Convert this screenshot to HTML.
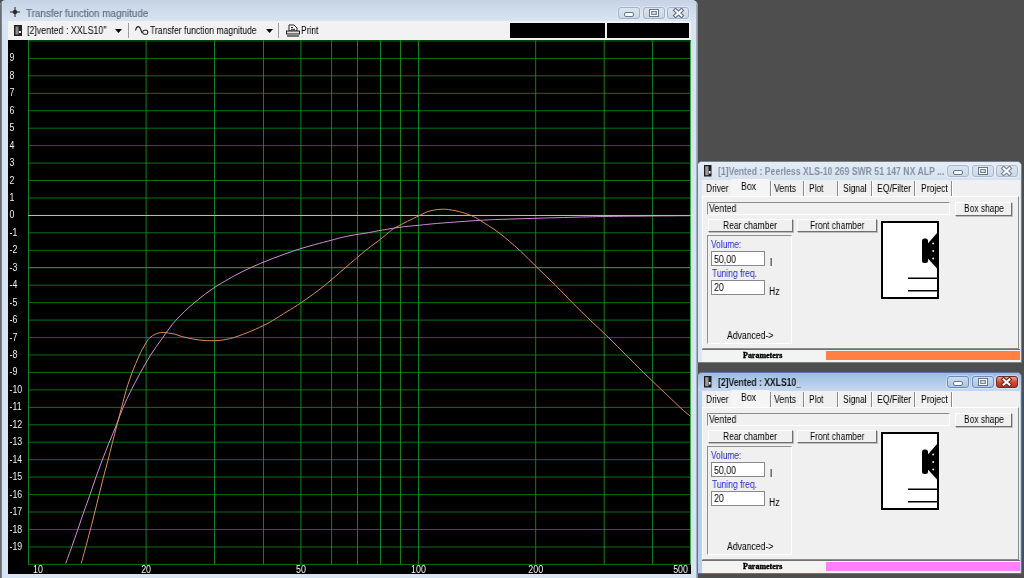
<!DOCTYPE html>
<html><head><meta charset="utf-8"><title>Transfer function magnitude</title>
<style>
html,body{margin:0;padding:0}
body{width:1024px;height:578px;overflow:hidden;background:#4e4e4e;font-family:"Liberation Sans",sans-serif;font-size:10px;color:#000;position:relative}
.abs{position:absolute}
.t{position:absolute;white-space:nowrap;line-height:14px;transform-origin:0 50%;display:block;will-change:transform}
.mw{position:absolute;left:0;top:0;width:698px;height:578px;background:#d9e4f2;overflow:hidden;border-radius:6px 6px 0 0}
.mw .edge{position:absolute;left:0;top:0;width:2px;height:578px;background:linear-gradient(90deg,#5c6066,#8a919a)}
.mw .redge{position:absolute;left:696px;top:0;width:2px;height:578px;background:linear-gradient(90deg,#b4bfcc,#7c848e)}
.mtitle{position:absolute;left:2px;top:0;width:694px;height:21px;background:linear-gradient(#c5d3e4,#d9e4f1)}
.toolbar{position:absolute;left:8px;top:21px;width:683px;height:19px;background:#f2f2f2}
.plot{position:absolute;left:8px;top:40px;will-change:transform}
.tsep{position:absolute;top:23px;width:1px;height:15px;background:#9c9c9c}
.blk{position:absolute;top:23px;height:15px;background:#000}
.wb{position:absolute;top:6.5px;width:22px;height:12px;border:1px solid #a3b2c6;border-radius:3px;background:linear-gradient(#dbe5f1,#cbd8e8);box-sizing:border-box;box-shadow:0 0 0 1px rgba(255,255,255,.35)}
.wb i{position:absolute;display:block;box-sizing:border-box}
.wmin i{left:5px;top:4px;width:10px;height:5px;border:1.5px solid #6a768c;background:#fafbfd;border-radius:2px}
.wmax i{left:5.5px;top:1.3px;width:9.5px;height:8px;border:1.5px solid #6a768c;background:#fafbfd;box-shadow:inset 0 0 0 1.1px #fafbfd, inset 0 0 0 2.3px #7a869a}
.wcls svg{position:absolute;left:3.5px;top:0}
.cw{position:absolute;width:325px;height:202px;background:#dde7f3;border-radius:5px 5px 0 0;box-sizing:border-box;border:1px solid #79818c;overflow:hidden}
.cw.act{background:#b5cfec;border-color:#56779f}
.cw>div{position:absolute;box-sizing:border-box}
.ctitle{left:0;top:0;width:323px;height:18px;background:linear-gradient(#e4ecf6,#d6e1ef)}
.act .ctitle{background:linear-gradient(#9dbce1,#c6d9ef)}
.cw .wb{top:3px;border-color:#aab8cb}
.act .wb{border-color:#6f8db3;background:linear-gradient(#c9dcf1,#a9c5e6)}
.act .wcls{background:linear-gradient(#e9a899,#cf4a32 50%,#b9341c);border-color:#6a2f28}
.cbody{background:#f0f0f0}
.seltab{background:#f5f5f5}
.sep{background:#8c8c8c;box-shadow:1px 0 0 #fff}
.panel{border:1px solid;border-color:#fff #8c8c8c #8c8c8c #fff}
.field{border:1px solid;border-color:#8c8c8c #fff #fff #8c8c8c}
.btn{border:1px solid;border-color:#fff #707070 #707070 #fff;box-shadow:1px 1px 0 #bdbdbd;background:#f0f0f0}
.sub{border:1px solid;border-color:#909090 #fff #fff #909090}
.inp{border:1px solid #8a8a8a;background:#fff}
.status{background:#f3f3f3;border-top:1px solid #707070}
</style></head><body>
<div class="mw">
<div class="mtitle"></div>
<svg class="abs" style="left:10px;top:7px" width="10" height="10" viewBox="0 0 10 10"><circle cx="5" cy="5" r="1.8" fill="#444" stroke="#222" stroke-width="1"/><path d="M5 0V10M0 5H10" stroke="#222" stroke-width="1"/></svg>
<span class="t" style="left:25.50px;top:6.06px;font-size:10.5px;transform:scaleX(0.9383);color:#5f7086;-webkit-text-stroke:.2px #5f7086;">Transfer function magnitude</span>
<span class="wb wmin" style="left:618px"><i></i></span><span class="wb wmax" style="left:642.5px"><i></i></span><span class="wb wcls" style="left:667px"><svg width="13" height="10" viewBox="-1 -0.5 13 10"><path d="M2.6 1.9 L8.4 7.1 M8.4 1.9 L2.6 7.1" stroke="#64708a" stroke-width="4.2" stroke-linecap="square" fill="none"/><path d="M2.6 1.9 L8.4 7.1 M8.4 1.9 L2.6 7.1" stroke="#fafbfd" stroke-width="2" stroke-linecap="square" fill="none"/></svg></span>
<div class="toolbar"></div>
<svg class="abs" style="left:14px;top:25px" width="8" height="11" viewBox="0 0 8 11"><rect width="8" height="11" fill="#222"/><rect x="1.5" y="1.5" width="3" height="8" fill="#8c8c8c"/><rect x="5" y="6" width="2" height="2" fill="#eee"/></svg>
<span class="t" style="left:26.60px;top:24.43px;font-size:10px;transform:scaleX(0.8857);">[2]vented : XXLS10''</span>
<svg class="abs" style="left:115px;top:29px" width="7" height="4" viewBox="0 0 7 4"><path d="M0 0H7L3.5 4Z" fill="#000"/></svg>
<i class="tsep" style="left:128px"></i>
<svg class="abs" style="left:135px;top:25px" width="14" height="11" viewBox="0 0 14 11"><path d="M0.5 5.5 C1.5 0.5 4.5 0.5 5.8 4.5 L7 8" fill="none" stroke="#222" stroke-width="1.1"/><rect x="7.8" y="5.3" width="5" height="4" rx="1.6" fill="none" stroke="#222" stroke-width="1.1"/></svg>
<span class="t" style="left:150.40px;top:24.43px;font-size:10px;transform:scaleX(0.8588);">Transfer function magnitude</span>
<svg class="abs" style="left:266px;top:29px" width="7" height="4" viewBox="0 0 7 4"><path d="M0 0H7L3.5 4Z" fill="#000"/></svg>
<i class="tsep" style="left:278px"></i>
<svg class="abs" style="left:285.5px;top:24px" width="14" height="13" viewBox="0 0 14 13"><path d="M3 7V1H8L11 4V7Z" fill="#fff" stroke="#222" stroke-width="1"/><rect x="0.5" y="7" width="13" height="3" fill="#ddd" stroke="#222" stroke-width="1"/><path d="M1 12H13" stroke="#222" stroke-width="1.2"/><path d="M5 3.5H7M5 5.3H9" stroke="#222" stroke-width="1"/></svg>
<span class="t" style="left:300.50px;top:24.43px;font-size:10px;transform:scaleX(0.8463);">Print</span>
<i class="blk" style="left:510px;width:95px"></i><i class="blk" style="left:607px;width:82px"></i>
<svg class="plot" width="683" height="534" viewBox="8 40 683 534" stroke-width="0.85">
<rect x="8" y="40" width="683" height="534" fill="#000"/>
<line x1="28.0" y1="564.4" x2="690.9" y2="564.4" stroke="#10831a"/>
<line x1="28.0" y1="547.0" x2="690.9" y2="547.0" stroke="#10831a"/>
<line x1="28.0" y1="529.5" x2="690.9" y2="529.5" stroke="#10831a"/>
<line x1="28.0" y1="512.0" x2="690.9" y2="512.0" stroke="#10831a"/>
<line x1="28.0" y1="494.6" x2="690.9" y2="494.6" stroke="#10831a"/>
<line x1="28.0" y1="477.1" x2="690.9" y2="477.1" stroke="#10831a"/>
<line x1="28.0" y1="459.7" x2="690.9" y2="459.7" stroke="#10831a"/>
<line x1="28.0" y1="442.2" x2="690.9" y2="442.2" stroke="#10831a"/>
<line x1="28.0" y1="424.8" x2="690.9" y2="424.8" stroke="#10831a"/>
<line x1="28.0" y1="407.4" x2="690.9" y2="407.4" stroke="#10831a"/>
<line x1="28.0" y1="389.9" x2="690.9" y2="389.9" stroke="#10831a"/>
<line x1="28.0" y1="372.4" x2="690.9" y2="372.4" stroke="#10831a"/>
<line x1="28.0" y1="355.0" x2="690.9" y2="355.0" stroke="#10831a"/>
<line x1="28.0" y1="337.6" x2="690.9" y2="337.6" stroke="#10831a"/>
<line x1="28.0" y1="320.1" x2="690.9" y2="320.1" stroke="#10831a"/>
<line x1="28.0" y1="302.6" x2="690.9" y2="302.6" stroke="#10831a"/>
<line x1="28.0" y1="285.2" x2="690.9" y2="285.2" stroke="#10831a"/>
<line x1="28.0" y1="267.8" x2="690.9" y2="267.8" stroke="#10831a"/>
<line x1="28.0" y1="250.3" x2="690.9" y2="250.3" stroke="#10831a"/>
<line x1="28.0" y1="232.8" x2="690.9" y2="232.8" stroke="#10831a"/>
<line x1="28.0" y1="215.4" x2="690.9" y2="215.4" stroke="#10831a"/>
<line x1="28.0" y1="198.0" x2="690.9" y2="198.0" stroke="#10831a"/>
<line x1="28.0" y1="180.5" x2="690.9" y2="180.5" stroke="#10831a"/>
<line x1="28.0" y1="163.1" x2="690.9" y2="163.1" stroke="#10831a"/>
<line x1="28.0" y1="145.6" x2="690.9" y2="145.6" stroke="#10831a"/>
<line x1="28.0" y1="128.2" x2="690.9" y2="128.2" stroke="#10831a"/>
<line x1="28.0" y1="110.7" x2="690.9" y2="110.7" stroke="#10831a"/>
<line x1="28.0" y1="93.3" x2="690.9" y2="93.3" stroke="#10831a"/>
<line x1="28.0" y1="75.8" x2="690.9" y2="75.8" stroke="#10831a"/>
<line x1="28.0" y1="58.4" x2="690.9" y2="58.4" stroke="#10831a"/>
<line x1="28.0" y1="40.9" x2="690.9" y2="40.9" stroke="#10831a"/>
<line x1="28.5" y1="40.4" x2="28.5" y2="564.3" stroke="#14991a"/>
<line x1="146.1" y1="40.4" x2="146.1" y2="564.3" stroke="#14991a"/>
<line x1="214.5" y1="40.4" x2="214.5" y2="564.3" stroke="#14991a"/>
<line x1="263.5" y1="40.4" x2="263.5" y2="564.3" stroke="#14991a"/>
<line x1="300.9" y1="40.4" x2="300.9" y2="564.3" stroke="#14991a"/>
<line x1="331.6" y1="40.4" x2="331.6" y2="564.3" stroke="#14991a"/>
<line x1="357.5" y1="40.4" x2="357.5" y2="564.3" stroke="#14991a"/>
<line x1="380.5" y1="40.4" x2="380.5" y2="564.3" stroke="#14991a"/>
<line x1="400.5" y1="40.4" x2="400.5" y2="564.3" stroke="#14991a"/>
<line x1="418.5" y1="40.4" x2="418.5" y2="564.3" stroke="#14991a"/>
<line x1="535.7" y1="40.4" x2="535.7" y2="564.3" stroke="#14991a"/>
<line x1="604.2" y1="40.4" x2="604.2" y2="564.3" stroke="#14991a"/>
<line x1="652.6" y1="40.4" x2="652.6" y2="564.3" stroke="#14991a"/>
<line x1="690.6" y1="40.4" x2="690.6" y2="564.3" stroke="#35c447" stroke-width="1"/>
<line x1="28.0" y1="215.5" x2="690.9" y2="215.5" stroke="#c9b988" stroke-width="1"/>
<line x1="28.0" y1="267.5" x2="690.9" y2="267.5" stroke="#2f66cc" stroke-width="1"/>
<path d="M65.7 563.5C66.7 560.7 69.8 552.3 71.8 546.7C73.8 541.1 75.7 535.6 77.7 529.8C79.7 524.0 81.7 517.9 83.8 512.0C85.8 506.1 88.0 500.5 90.0 494.7C92.0 488.9 93.9 483.1 95.9 477.3C97.9 471.6 100.0 466.0 102.2 460.2C104.5 454.4 106.7 448.6 109.1 442.6C111.5 436.7 114.3 430.4 116.6 424.5C118.9 418.6 120.6 413.2 123.1 407.4C125.6 401.6 128.6 395.5 131.5 389.7C134.4 383.9 137.1 378.6 140.3 372.8C143.5 367.0 146.9 360.9 150.6 355.1C154.3 349.3 158.4 343.6 162.6 337.8C166.8 332.0 170.4 326.2 175.8 320.3C181.2 314.4 187.9 308.1 194.9 302.3C201.9 296.5 208.5 291.2 217.8 285.4C227.2 279.6 238.4 273.2 251.2 267.4C264.0 261.6 281.5 255.0 294.9 250.5C308.3 246.0 322.3 242.7 331.5 240.2C340.7 237.7 343.9 236.9 350.0 235.7C356.1 234.4 363.3 233.6 368.4 232.7C373.5 231.8 375.1 231.3 380.4 230.4C385.7 229.5 393.6 228.0 400.0 227.2C406.4 226.3 411.9 226.0 418.6 225.3C425.3 224.6 429.8 224.0 440.0 223.2C450.2 222.4 470.0 220.9 480.0 220.3C490.0 219.7 490.7 219.7 500.0 219.4C509.3 219.1 527.1 218.6 535.9 218.3C544.7 218.0 546.5 218.0 553.0 217.8C559.5 217.6 567.2 217.4 575.0 217.2C582.8 217.0 589.2 216.8 600.0 216.6C610.8 216.4 625.0 216.2 640.0 216.1C655.0 215.9 681.7 215.8 690.0 215.7" fill="none" stroke="#dc90e2" stroke-width="0.95"/>
<path d="M81.2 563.5C82.0 560.7 84.3 552.3 85.8 546.7C87.3 541.1 88.8 535.6 90.3 529.8C91.9 524.0 93.4 517.9 94.8 512.0C96.3 506.1 97.7 500.5 99.1 494.7C100.5 488.9 101.9 483.1 103.4 477.3C104.9 471.6 106.5 466.0 108.0 460.2C109.5 454.4 110.9 448.6 112.4 442.6C113.9 436.7 115.6 430.4 117.1 424.5C118.6 418.6 120.1 413.2 121.6 407.4C123.1 401.6 124.6 395.5 126.3 389.7C128.0 383.9 129.8 378.6 132.0 372.8C134.2 367.0 137.6 359.2 139.4 355.1C141.2 351.0 141.8 350.4 143.0 348.2C144.2 346.0 145.3 343.8 146.5 342.0C147.7 340.2 148.5 338.9 150.0 337.6C151.5 336.3 153.3 335.0 155.5 334.1C157.7 333.2 160.0 332.5 163.1 332.5C166.2 332.5 170.6 333.2 173.8 333.9C177.1 334.6 178.5 335.7 182.6 336.7C186.7 337.7 192.9 339.2 198.2 339.9C203.5 340.6 209.2 340.9 214.4 340.7C219.6 340.5 224.2 340.0 229.6 338.7C235.0 337.4 241.4 335.0 247.0 332.8C252.6 330.6 259.0 327.7 263.3 325.6C267.6 323.6 268.7 322.8 272.6 320.5C276.6 318.2 282.2 314.6 287.0 311.6C291.8 308.6 295.3 306.8 301.6 302.4C307.9 298.1 317.5 291.2 324.8 285.4C332.1 279.5 338.8 273.2 345.7 267.4C352.6 261.5 360.2 254.9 366.0 250.2C371.8 245.5 376.7 242.2 380.4 239.3C384.1 236.4 385.8 234.7 388.4 232.7C391.0 230.7 391.1 229.9 396.2 227.1C401.3 224.3 413.4 218.4 419.0 215.7C424.6 213.0 425.7 212.0 430.0 210.9C434.3 209.8 439.8 209.1 444.7 209.2C449.6 209.4 455.1 210.6 459.5 211.7C463.9 212.8 467.9 214.2 471.3 215.6C474.7 217.0 475.4 217.4 480.0 220.3C484.6 223.2 492.5 227.9 499.1 232.9C505.7 237.9 513.4 244.7 519.7 250.4C526.0 256.1 531.0 261.5 536.9 267.3C542.8 273.1 549.5 279.3 555.4 285.2C561.3 291.1 566.4 296.6 572.2 302.5C578.0 308.4 584.2 314.4 590.3 320.3C596.4 326.2 602.9 332.0 608.8 337.8C614.7 343.6 620.1 349.1 625.9 354.9C631.7 360.7 637.8 366.9 643.8 372.8C649.7 378.6 655.5 383.9 661.5 389.7C667.5 395.5 675.3 402.9 680.0 407.3C684.7 411.7 688.2 414.4 689.8 415.8" fill="none" stroke="#e6925e" stroke-width="0.95"/>
<g font-family="Liberation Sans, sans-serif" font-size="10.2" fill="#f0f0f0" stroke="none">
<text x="9.5" y="550.0" textLength="12.7" lengthAdjust="spacingAndGlyphs">-19</text>
<text x="9.5" y="532.5" textLength="12.7" lengthAdjust="spacingAndGlyphs">-18</text>
<text x="9.5" y="515.0" textLength="12.7" lengthAdjust="spacingAndGlyphs">-17</text>
<text x="9.5" y="497.6" textLength="12.7" lengthAdjust="spacingAndGlyphs">-16</text>
<text x="9.5" y="480.1" textLength="12.7" lengthAdjust="spacingAndGlyphs">-15</text>
<text x="9.5" y="462.7" textLength="12.7" lengthAdjust="spacingAndGlyphs">-14</text>
<text x="9.5" y="445.2" textLength="12.7" lengthAdjust="spacingAndGlyphs">-13</text>
<text x="9.5" y="427.8" textLength="12.7" lengthAdjust="spacingAndGlyphs">-12</text>
<text x="9.5" y="410.4" textLength="12.0" lengthAdjust="spacingAndGlyphs">-11</text>
<text x="9.5" y="392.9" textLength="12.7" lengthAdjust="spacingAndGlyphs">-10</text>
<text x="9.5" y="375.4" textLength="7.8" lengthAdjust="spacingAndGlyphs">-9</text>
<text x="9.5" y="358.0" textLength="7.8" lengthAdjust="spacingAndGlyphs">-8</text>
<text x="9.5" y="340.6" textLength="7.8" lengthAdjust="spacingAndGlyphs">-7</text>
<text x="9.5" y="323.1" textLength="7.8" lengthAdjust="spacingAndGlyphs">-6</text>
<text x="9.5" y="305.6" textLength="7.8" lengthAdjust="spacingAndGlyphs">-5</text>
<text x="9.5" y="288.2" textLength="7.8" lengthAdjust="spacingAndGlyphs">-4</text>
<text x="9.5" y="270.8" textLength="7.8" lengthAdjust="spacingAndGlyphs">-3</text>
<text x="9.5" y="253.3" textLength="7.8" lengthAdjust="spacingAndGlyphs">-2</text>
<text x="9.5" y="235.8" textLength="7.8" lengthAdjust="spacingAndGlyphs">-1</text>
<text x="9.5" y="218.4" textLength="4.9" lengthAdjust="spacingAndGlyphs">0</text>
<text x="9.5" y="201.0" textLength="4.9" lengthAdjust="spacingAndGlyphs">1</text>
<text x="9.5" y="183.5" textLength="4.9" lengthAdjust="spacingAndGlyphs">2</text>
<text x="9.5" y="166.1" textLength="4.9" lengthAdjust="spacingAndGlyphs">3</text>
<text x="9.5" y="148.6" textLength="4.9" lengthAdjust="spacingAndGlyphs">4</text>
<text x="9.5" y="131.2" textLength="4.9" lengthAdjust="spacingAndGlyphs">5</text>
<text x="9.5" y="113.7" textLength="4.9" lengthAdjust="spacingAndGlyphs">6</text>
<text x="9.5" y="96.3" textLength="4.9" lengthAdjust="spacingAndGlyphs">7</text>
<text x="9.5" y="78.8" textLength="4.9" lengthAdjust="spacingAndGlyphs">8</text>
<text x="9.5" y="61.4" textLength="4.9" lengthAdjust="spacingAndGlyphs">9</text>
<text x="33.0" y="573" text-anchor="start" textLength="9.9" lengthAdjust="spacingAndGlyphs">10</text>
<text x="146.1" y="573" text-anchor="middle" textLength="9.9" lengthAdjust="spacingAndGlyphs">20</text>
<text x="300.9" y="573" text-anchor="middle" textLength="9.9" lengthAdjust="spacingAndGlyphs">50</text>
<text x="418.5" y="573" text-anchor="middle" textLength="14.8" lengthAdjust="spacingAndGlyphs">100</text>
<text x="535.7" y="573" text-anchor="middle" textLength="14.8" lengthAdjust="spacingAndGlyphs">200</text>
<text x="688.0" y="573" text-anchor="end" textLength="14.8" lengthAdjust="spacingAndGlyphs">500</text>
</g>
</svg>
<i class="edge"></i><i class="redge"></i>
</div>
<div class="cw" style="left:697px;top:161px">
<div class="ctitle"></div>
<svg class="abs" style="left:6px;top:3px" width="7.5" height="11.5" viewBox="0 0 7.5 11.5"><rect width="7.5" height="11.5" fill="#1c1c1c"/><rect x="1.2" y="1.2" width="3.3" height="9" fill="#9a9a9a"/><rect x="4.8" y="6" width="1.8" height="2.5" fill="#efefef"/></svg>
<span class="t" style="left:19.80px;top:2.16px;font-size:10.5px;transform:scaleX(0.8269);font-weight:bold;color:#8491a5;">[1]Vented : Peerless XLS-10 269 SWR 51 147 NX ALP ...</span>
<span class="wb wmin" style="left:249px"><i></i></span><span class="wb wmax" style="left:273.5px"><i></i></span><span class="wb wcls" style="left:297.5px"><svg width="13" height="10" viewBox="-1 -0.5 13 10"><path d="M2.6 1.9 L8.4 7.1 M8.4 1.9 L2.6 7.1" stroke="#7a869a" stroke-width="4.2" stroke-linecap="square" fill="none"/><path d="M2.6 1.9 L8.4 7.1 M8.4 1.9 L2.6 7.1" stroke="#fafbfd" stroke-width="2" stroke-linecap="square" fill="none"/></svg></span>
<div class="cbody" style="left:4px;top:17.5px;width:318px;height:170px;"></div>
<div class="seltab" style="left:33px;top:17px;width:38px;height:17px;"></div>
<div class="sep" style="left:72px;top:19px;width:1px;height:15px;"></div>
<div class="sep" style="left:104.5px;top:19px;width:1px;height:15px;"></div>
<div class="sep" style="left:138.5px;top:19px;width:1px;height:15px;"></div>
<div class="sep" style="left:172.5px;top:19px;width:1px;height:15px;"></div>
<div class="sep" style="left:216px;top:19px;width:1px;height:15px;"></div>
<div class="sep" style="left:253px;top:19px;width:1px;height:15px;"></div>
<span class="t" style="left:8.30px;top:20.03px;font-size:10px;transform:scaleX(0.8476);">Driver</span>
<span class="t" style="left:42.50px;top:18.23px;font-size:10px;transform:scaleX(0.8705);">Box</span>
<span class="t" style="left:76.40px;top:20.03px;font-size:10px;transform:scaleX(0.8833);">Vents</span>
<span class="t" style="left:110.60px;top:20.03px;font-size:10px;transform:scaleX(0.8357);">Plot</span>
<span class="t" style="left:144.50px;top:20.03px;font-size:10px;transform:scaleX(0.8490);">Signal</span>
<span class="t" style="left:178.50px;top:20.03px;font-size:10px;transform:scaleX(0.8670);">EQ/Filter</span>
<span class="t" style="left:222.60px;top:20.03px;font-size:10px;transform:scaleX(0.8611);">Project</span>
<div class="panel" style="left:4px;top:33.5px;width:317px;height:153px;"></div>
<div class="field" style="left:8.5px;top:40px;width:243.5px;height:13px;"></div>
<span class="t" style="left:10.50px;top:39.94px;font-size:10px;transform:scaleX(0.8799);">Vented</span>
<div class="btn" style="left:256.5px;top:40px;width:57px;height:13.5px;"></div>
<span class="t" style="left:265.90px;top:40.34px;font-size:10px;transform:scaleX(0.8423);">Box shape</span>
<div class="btn" style="left:9.5px;top:57px;width:85px;height:12.5px;"></div>
<span class="t" style="left:24.90px;top:56.84px;font-size:10px;transform:scaleX(0.8523);">Rear chamber</span>
<div class="btn" style="left:98.5px;top:57px;width:80.5px;height:12.5px;"></div>
<span class="t" style="left:111.70px;top:56.84px;font-size:10px;transform:scaleX(0.8351);">Front chamber</span>
<div class="sub" style="left:9px;top:73px;width:84.5px;height:108.5px;"></div>
<span class="t" style="left:13.10px;top:75.94px;font-size:10px;transform:scaleX(0.8386);color:#2028d0;">Volume:</span>
<div class="inp" style="left:13px;top:89px;width:53.5px;height:15px;"></div>
<span class="t" style="left:15.90px;top:90.53px;font-size:10px;transform:scaleX(0.8792);">50,00</span>
<span class="t" style="left:71.60px;top:94.04px;font-size:10px;">l</span>
<span class="t" style="left:14.10px;top:105.24px;font-size:10px;transform:scaleX(0.8492);color:#2028d0;">Tuning freq.</span>
<div class="inp" style="left:13px;top:117.5px;width:53.5px;height:15px;"></div>
<span class="t" style="left:15.90px;top:119.04px;font-size:10px;transform:scaleX(0.8811);">20</span>
<span class="t" style="left:71.00px;top:123.04px;font-size:10px;transform:scaleX(0.8673);">Hz</span>
<span class="t" style="left:28.70px;top:166.64px;font-size:10px;transform:scaleX(0.8631);">Advanced-&gt;</span>
<svg class="abs" style="left:183px;top:59px" width="58" height="78" viewBox="0 0 58 78"><rect x="1" y="1" width="56" height="76" fill="#fff" stroke="#000" stroke-width="2"/><rect x="41" y="17.5" width="6" height="24.5" rx="2.5" fill="#000"/><path d="M46 23.5 L56.5 11.5 L56.5 48 L46 36.5 Z" fill="#000"/><circle cx="52.2" cy="22.5" r="1" fill="#e6e6e6"/><circle cx="52.2" cy="30" r="1" fill="#e6e6e6"/><circle cx="52.2" cy="37.5" r="1" fill="#e6e6e6"/><path d="M27 57.3 H56 M27 69.8 H56" stroke="#000" stroke-width="1.5"/></svg>
<div class="status" style="left:4px;top:187px;width:318px;height:12.5px;"></div>
<div class="bar" style="left:128px;top:189px;width:194px;height:9px;background:#ff8040"></div>
<span class="t" style="left:45.00px;top:187.14px;font-size:7.4px;transform:scaleX(1.0802);font-weight:bold;font-family:'Liberation Serif',serif;-webkit-text-stroke:.35px #000;">Parameters</span>
</div>
<div class="cw act" style="left:697px;top:372px">
<div class="ctitle"></div>
<svg class="abs" style="left:6px;top:3px" width="7.5" height="11.5" viewBox="0 0 7.5 11.5"><rect width="7.5" height="11.5" fill="#1c1c1c"/><rect x="1.2" y="1.2" width="3.3" height="9" fill="#9a9a9a"/><rect x="4.8" y="6" width="1.8" height="2.5" fill="#efefef"/></svg>
<span class="t" style="left:19.80px;top:2.16px;font-size:10.5px;transform:scaleX(0.8175);font-weight:bold;color:#16191d;">[2]Vented : XXLS10_</span>
<span class="wb wmin" style="left:249px"><i></i></span><span class="wb wmax" style="left:273.5px"><i></i></span><span class="wb wcls" style="left:297.5px"><svg width="13" height="10" viewBox="-1 -0.5 13 10"><path d="M2.6 1.9 L8.4 7.1 M8.4 1.9 L2.6 7.1" stroke="#7a2a20" stroke-width="4.2" stroke-linecap="square" fill="none"/><path d="M2.6 1.9 L8.4 7.1 M8.4 1.9 L2.6 7.1" stroke="#ffffff" stroke-width="2" stroke-linecap="square" fill="none"/></svg></span>
<div class="cbody" style="left:4px;top:17.5px;width:318px;height:170px;"></div>
<div class="seltab" style="left:33px;top:17px;width:38px;height:17px;"></div>
<div class="sep" style="left:72px;top:19px;width:1px;height:15px;"></div>
<div class="sep" style="left:104.5px;top:19px;width:1px;height:15px;"></div>
<div class="sep" style="left:138.5px;top:19px;width:1px;height:15px;"></div>
<div class="sep" style="left:172.5px;top:19px;width:1px;height:15px;"></div>
<div class="sep" style="left:216px;top:19px;width:1px;height:15px;"></div>
<div class="sep" style="left:253px;top:19px;width:1px;height:15px;"></div>
<span class="t" style="left:8.30px;top:20.04px;font-size:10px;transform:scaleX(0.8476);">Driver</span>
<span class="t" style="left:42.50px;top:18.24px;font-size:10px;transform:scaleX(0.8705);">Box</span>
<span class="t" style="left:76.40px;top:20.04px;font-size:10px;transform:scaleX(0.8833);">Vents</span>
<span class="t" style="left:110.60px;top:20.04px;font-size:10px;transform:scaleX(0.8357);">Plot</span>
<span class="t" style="left:144.50px;top:20.04px;font-size:10px;transform:scaleX(0.8490);">Signal</span>
<span class="t" style="left:178.50px;top:20.04px;font-size:10px;transform:scaleX(0.8670);">EQ/Filter</span>
<span class="t" style="left:222.60px;top:20.04px;font-size:10px;transform:scaleX(0.8611);">Project</span>
<div class="panel" style="left:4px;top:33.5px;width:317px;height:153px;"></div>
<div class="field" style="left:8.5px;top:40px;width:243.5px;height:13px;"></div>
<span class="t" style="left:10.50px;top:39.94px;font-size:10px;transform:scaleX(0.8799);">Vented</span>
<div class="btn" style="left:256.5px;top:40px;width:57px;height:13.5px;"></div>
<span class="t" style="left:265.90px;top:40.34px;font-size:10px;transform:scaleX(0.8423);">Box shape</span>
<div class="btn" style="left:9.5px;top:57px;width:85px;height:12.5px;"></div>
<span class="t" style="left:24.90px;top:56.84px;font-size:10px;transform:scaleX(0.8523);">Rear chamber</span>
<div class="btn" style="left:98.5px;top:57px;width:80.5px;height:12.5px;"></div>
<span class="t" style="left:111.70px;top:56.84px;font-size:10px;transform:scaleX(0.8351);">Front chamber</span>
<div class="sub" style="left:9px;top:73px;width:84.5px;height:108.5px;"></div>
<span class="t" style="left:13.10px;top:75.94px;font-size:10px;transform:scaleX(0.8386);color:#2028d0;">Volume:</span>
<div class="inp" style="left:13px;top:89px;width:53.5px;height:15px;"></div>
<span class="t" style="left:15.90px;top:90.54px;font-size:10px;transform:scaleX(0.8792);">50,00</span>
<span class="t" style="left:71.60px;top:94.04px;font-size:10px;">l</span>
<span class="t" style="left:14.10px;top:105.24px;font-size:10px;transform:scaleX(0.8492);color:#2028d0;">Tuning freq.</span>
<div class="inp" style="left:13px;top:117.5px;width:53.5px;height:15px;"></div>
<span class="t" style="left:15.90px;top:119.04px;font-size:10px;transform:scaleX(0.8811);">20</span>
<span class="t" style="left:71.00px;top:123.04px;font-size:10px;transform:scaleX(0.8673);">Hz</span>
<span class="t" style="left:28.70px;top:166.63px;font-size:10px;transform:scaleX(0.8631);">Advanced-&gt;</span>
<svg class="abs" style="left:183px;top:59px" width="58" height="78" viewBox="0 0 58 78"><rect x="1" y="1" width="56" height="76" fill="#fff" stroke="#000" stroke-width="2"/><rect x="41" y="17.5" width="6" height="24.5" rx="2.5" fill="#000"/><path d="M46 23.5 L56.5 11.5 L56.5 48 L46 36.5 Z" fill="#000"/><circle cx="52.2" cy="22.5" r="1" fill="#e6e6e6"/><circle cx="52.2" cy="30" r="1" fill="#e6e6e6"/><circle cx="52.2" cy="37.5" r="1" fill="#e6e6e6"/><path d="M27 57.3 H56 M27 69.8 H56" stroke="#000" stroke-width="1.5"/></svg>
<div class="status" style="left:4px;top:187px;width:318px;height:12.5px;"></div>
<div class="bar" style="left:128px;top:189px;width:194px;height:9px;background:#ff80ff"></div>
<span class="t" style="left:45.00px;top:187.14px;font-size:7.4px;transform:scaleX(1.0802);font-weight:bold;font-family:'Liberation Serif',serif;-webkit-text-stroke:.35px #000;">Parameters</span>
</div>
</body></html>
